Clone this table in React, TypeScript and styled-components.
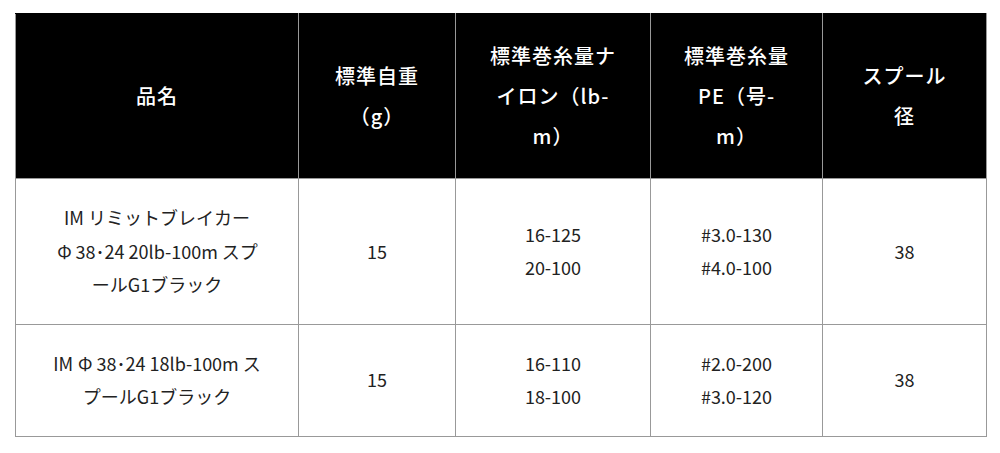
import React from "react";
import styled, { createGlobalStyle } from "styled-components";

const GlobalStyle = createGlobalStyle`
  html, body {
    margin: 0;
    padding: 0;
    background: #fff;
  }
  body {
    font-family: "Noto Sans CJK JP", "Noto Sans", sans-serif;
  }
`;

const Page = styled.div`
  padding: 13px 14px 0 15px;
`;

const Table = styled.table`
  width: 971px;
  border-collapse: collapse;
  table-layout: fixed;
  border: 1px solid #999;
`;

const Col = styled.col<{ $width: number }>`
  width: ${(p) => p.$width}px;
`;

const HeadCell = styled.th`
  background: #000;
  color: #fff;
  font-size: 20px;
  font-weight: 500;
  letter-spacing: 1px;
  line-height: 40px;
  padding: 22px 33px;
  border: 1px solid #999;
  border-top-color: #000;
  text-align: center;
  vertical-align: middle;
`;

const Cell = styled.td`
  color: #222;
  font-size: 18px;
  line-height: 33.5px;
  padding: 22px 34px;
  border: 1px solid #999;
  text-align: center;
  vertical-align: middle;
`;

// full-width diameter mark, as the source font draws it
const Phi = styled.span`
  padding: 0 4px 0 1px;
`;

const columns = [
  { label: "品名", width: 283 },
  { label: "標準自重（g）", width: 157 },
  { label: "標準巻糸量ナイロン（lb-m）", width: 195 },
  { label: "標準巻糸量PE（号-m）", width: 172 },
  { label: "スプール径", width: 164 },
];

const rows = [
  {
    prefix: "IM リミットブレイカー ",
    suffix: "38･24 20lb-100m スプールG1ブラック",
    weight: "15",
    nylon: ["16-125", "20-100"],
    pe: ["#3.0-130", "#4.0-100"],
    spool: "38",
  },
  {
    prefix: "IM ",
    suffix: "38･24 18lb-100m スプールG1ブラック",
    weight: "15",
    nylon: ["16-110", "18-100"],
    pe: ["#2.0-200", "#3.0-120"],
    spool: "38",
  },
];

const Lines = ({ items }: { items: string[] }) => (
  <>
    {items.map((t, i) => (
      <React.Fragment key={t}>
        {i > 0 && <br />}
        {t}
      </React.Fragment>
    ))}
  </>
);

export default function App() {
  return (
    <Page>
      <GlobalStyle />
      <Table>
        <colgroup>
          {columns.map((c) => (
            <Col key={c.label} $width={c.width} />
          ))}
        </colgroup>
        <thead>
          <tr>
            {columns.map((c) => (
              <HeadCell key={c.label}>{c.label}</HeadCell>
            ))}
          </tr>
        </thead>
        <tbody>
          {rows.map((r) => (
            <tr key={r.suffix}>
              <Cell>
                {r.prefix}
                <Phi>Φ</Phi>
                {r.suffix}
              </Cell>
              <Cell>{r.weight}</Cell>
              <Cell>
                <Lines items={r.nylon} />
              </Cell>
              <Cell>
                <Lines items={r.pe} />
              </Cell>
              <Cell>{r.spool}</Cell>
            </tr>
          ))}
        </tbody>
      </Table>
    </Page>
  );
}
